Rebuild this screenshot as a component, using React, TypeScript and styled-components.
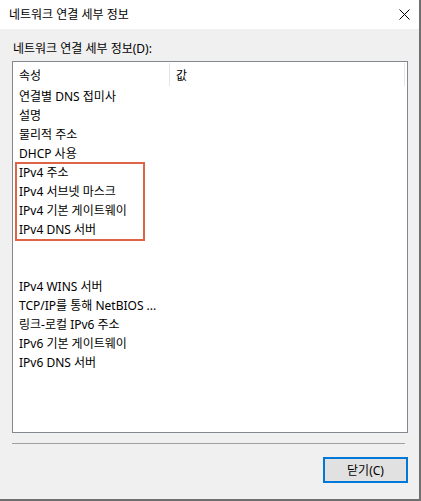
import React from 'react';
import styled, { createGlobalStyle } from 'styled-components';

const GlobalStyle = createGlobalStyle`
  html, body {
    margin: 0;
    padding: 0;
    background: #f0f0f0;
  }
  * {
    box-sizing: border-box;
  }
`;

const Window = styled.div`
  width: 421px;
  height: 501px;
  display: flex;
  flex-direction: column;
  border-right: 2px solid #6f6f6f;
  border-bottom: 2px solid #6f6f6f;
  font-family: "Noto Sans", "Noto Sans CJK KR", sans-serif;
  font-size: 12px;
  color: #000;
`;

const TitleBar = styled.div`
  height: 29px;
  flex: none;
  background: #fff;
  display: flex;
  align-items: center;
  justify-content: space-between;
  padding: 0 9px 0 9px;
`;

const Title = styled.span`
  font-size: 12px;
  line-height: 16px;
`;

const Body = styled.div`
  flex: 1;
  background: #f0f0f0;
  display: flex;
  flex-direction: column;
  padding: 12px 11px 0 12px;
`;

const Label = styled.div`
  height: 20px;
  line-height: 16px;
  padding-left: 1px;
`;

const ListBox = styled.div`
  height: 372px;
  width: 396px;
  background: #fff;
  border: 1px solid #828790;
  display: flex;
  flex-direction: column;
`;

const Header = styled.div`
  height: 25px;
  display: flex;
  align-items: stretch;
  padding-top: 1px;
`;

const HeaderCell = styled.div<{ $width: number }>`
  width: ${p => p.$width}px;
  padding-left: 6px;
  display: flex;
  align-items: center;
  border-right: 1px solid #e5e5e5;
  margin-bottom: 1px;
`;

const Row = styled.div`
  height: 19px;
  line-height: 19px;
  padding-left: 6px;
  white-space: nowrap;
`;

const Highlight = styled.div`
  position: relative;
`;

const RedFrame = styled.div`
  position: absolute;
  left: 2px;
  top: -1px;
  width: 130px;
  height: 79px;
  border: 2px solid #dd6445;
  pointer-events: none;
`;

const Divider = styled.div`
  height: 1px;
  width: 393px;
  background: #a0a0a0;
  margin-top: 10px;
`;

const ButtonRow = styled.div`
  display: flex;
  justify-content: flex-end;
  margin-top: 13px;
`;

const Button = styled.button`
  width: 85px;
  height: 26px;
  background: #e1e1e1;
  border: 2px solid #0078d7;
  font-family: "Noto Sans", "Noto Sans CJK KR", sans-serif;
  font-size: 12px;
  color: #000;
  padding: 0;
`;

const CloseIcon = () => (
  <svg width="11" height="11" viewBox="0 0 11 11">
    <path d="M0.5 0.5 L10.5 10.5 M10.5 0.5 L0.5 10.5" stroke="#000" strokeWidth="1" fill="none" />
  </svg>
);

const topRows = ['연결별 DNS 접미사', '설명', '물리적 주소', 'DHCP 사용'];
const ipv4Rows = ['IPv4 주소', 'IPv4 서브넷 마스크', 'IPv4 기본 게이트웨이', 'IPv4 DNS 서버'];
const bottomRows = [
  '',
  '',
  'IPv4 WINS 서버',
  'TCP/IP를 통해 NetBIOS ...',
  '링크-로컬 IPv6 주소',
  'IPv6 기본 게이트웨이',
  'IPv6 DNS 서버',
];

export default function App() {
  return (
    <>
      <GlobalStyle />
      <Window>
        <TitleBar>
          <Title>네트워크 연결 세부 정보</Title>
          <CloseIcon />
        </TitleBar>
        <Body>
          <Label>네트워크 연결 세부 정보(D):</Label>
          <ListBox>
            <Header>
              <HeaderCell $width={157}>속성</HeaderCell>
              <HeaderCell $width={235}>값</HeaderCell>
            </Header>
            {topRows.map(r => (
              <Row key={r}>{r}</Row>
            ))}
            <Highlight>
              <RedFrame />
              {ipv4Rows.map(r => (
                <Row key={r}>{r}</Row>
              ))}
            </Highlight>
            {bottomRows.map((r, i) => (
              <Row key={i}>{r}</Row>
            ))}
          </ListBox>
          <Divider />
          <ButtonRow>
            <Button>닫기(C)</Button>
          </ButtonRow>
        </Body>
      </Window>
    </>
  );
}
